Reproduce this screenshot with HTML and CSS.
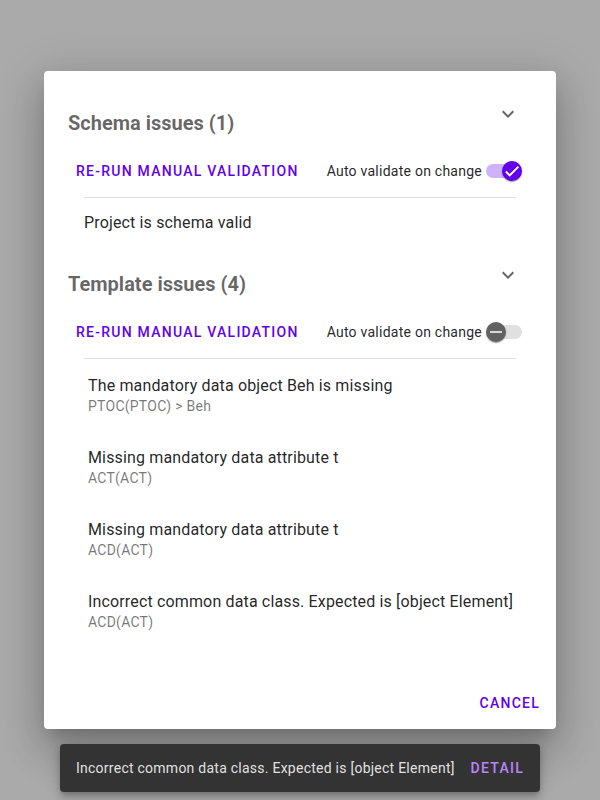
FILE: index.html
```html
<!DOCTYPE html>
<html lang="en">
<head>
<meta charset="utf-8">
<title>Validation</title>
<link rel="stylesheet" href="styles.css">
</head>
<body>
<div class="scrim">
  <div class="dialog">
    <div class="content">
      <section class="group">
        <div class="group-header">
          <h2 class="group-title">Schema issues (1)</h2>
          <button class="icon-btn" aria-label="expand"><svg viewBox="0 0 24 24" width="24" height="24"><path d="M16.59 8.59L12 13.17 7.41 8.59 6 10l6 6 6-6z" fill="#666"/></svg></button>
        </div>
        <div class="controls">
          <button class="text-btn">Re-run manual validation</button>
          <label class="formfield">
            <span>Auto validate on change</span>
            <span class="switch on">
              <span class="track"></span>
              <span class="handle"><svg viewBox="0 0 24 24" width="18" height="18"><path d="M19.69,5.23L8.96,15.96l-4.23-4.24L2.96,13.5l6,6L21.46,7L19.69,5.23z" fill="#fff"/></svg></span>
            </span>
          </label>
        </div>
        <hr class="divider">
        <ul class="list">
          <li class="item single">Project is schema valid</li>
        </ul>
      </section>
      <section class="group">
        <div class="group-header">
          <h2 class="group-title">Template issues (4)</h2>
          <button class="icon-btn" aria-label="expand"><svg viewBox="0 0 24 24" width="24" height="24"><path d="M16.59 8.59L12 13.17 7.41 8.59 6 10l6 6 6-6z" fill="#666"/></svg></button>
        </div>
        <div class="controls">
          <button class="text-btn">Re-run manual validation</button>
          <label class="formfield">
            <span>Auto validate on change</span>
            <span class="switch off">
              <span class="track"></span>
              <span class="handle"><svg viewBox="0 0 24 24" width="18" height="18"><path d="M20 13H4v-2h16v2z" fill="#fff"/></svg></span>
            </span>
          </label>
        </div>
        <hr class="divider">
        <ul class="list">
          <li class="item double"><span class="primary">The mandatory data object Beh is missing</span><span class="secondary">PTOC(PTOC) &gt; Beh</span></li>
          <li class="item double"><span class="primary">Missing mandatory data attribute t</span><span class="secondary">ACT(ACT)</span></li>
          <li class="item double"><span class="primary">Missing mandatory data attribute t</span><span class="secondary">ACD(ACT)</span></li>
          <li class="item double"><span class="primary">Incorrect common data class. Expected is [object Element]</span><span class="secondary">ACD(ACT)</span></li>
        </ul>
      </section>
    </div>
    <div class="actions">
      <button class="text-btn">Cancel</button>
    </div>
  </div>
  <div class="snackbar">
    <span class="snack-label">Incorrect common data class. Expected is [object Element]</span>
    <button class="text-btn snack-btn">Detail</button>
  </div>
</div>
</body>
</html>
```
FILE: styles.css
```css
* { box-sizing: border-box; }
html, body { margin: 0; padding: 0; }
body {
  font-family: Roboto, "Liberation Sans", sans-serif;
  background: #aaaaaa;
  -webkit-font-smoothing: antialiased;
}
.scrim {
  position: relative;
  min-height: 800px;
  display: flex;
  align-items: center;
  justify-content: center;
  background: #aaaaaa;
}
.dialog {
  width: 512px;
  background: #fff;
  border-radius: 4px;
  box-shadow: 0 11px 15px -7px rgba(0,0,0,.2), 0 24px 38px 3px rgba(0,0,0,.14), 0 9px 46px 8px rgba(0,0,0,.12);
  display: flex;
  flex-direction: column;
}
.content {
  padding: 14px 24px 30px;
}
.group-header {
  height: 68px;
  display: flex;
  justify-content: space-between;
  align-items: flex-start;
}
.group-title {
  margin: 0;
  padding-top: 28px;
  font-size: 20px;
  line-height: 20px;
  font-weight: 700;
  letter-spacing: 0;
  color: rgba(0,0,0,0.6);
}
.icon-btn {
  width: 48px;
  height: 48px;
  margin-top: 5px;
  border: 0;
  padding: 12px;
  background: none;
  display: flex;
  align-items: center;
  justify-content: center;
}
.controls {
  height: 36px;
  display: flex;
  align-items: center;
  justify-content: space-between;
}
.text-btn {
  height: 36px;
  padding: 0 8px;
  border: 0;
  background: none;
  font-family: Roboto, "Liberation Sans", sans-serif;
  font-size: 14px;
  font-weight: 500;
  letter-spacing: 1.25px;
  text-transform: uppercase;
  color: #6200ee;
}
.formfield {
  display: flex;
  align-items: center;
  padding-right: 10px;
  font-size: 14px;
  letter-spacing: 0.25px;
  color: rgba(0,0,0,0.87);
}
.switch {
  position: relative;
  width: 36px;
  height: 20px;
  margin-left: 4px;
  display: block;
}
.track {
  position: absolute;
  left: 0;
  top: 3px;
  width: 36px;
  height: 14px;
  border-radius: 7px;
}
.handle {
  position: absolute;
  top: 0;
  width: 20px;
  height: 20px;
  border-radius: 50%;
  display: flex;
  align-items: center;
  justify-content: center;
  box-shadow: 0 2px 1px -1px rgba(0,0,0,.2), 0 1px 1px 0 rgba(0,0,0,.14), 0 1px 3px 0 rgba(0,0,0,.12);
}
.switch.on .track { background: #cfb3f9; }
.switch.on .handle { left: 16px; background: #6200ee; }
.switch.off .track { background: #e0e0e0; }
.switch.off .handle { left: 0; background: #616161; }
.divider {
  margin: 8px 16px 0;
  border: 0;
  height: 1px;
  background: #e0e0e0;
}
.list {
  margin: 0;
  padding: 0;
  list-style: none;
}
.item {
  color: rgba(0,0,0,0.87);
  font-size: 16px;
  letter-spacing: 0.15px;
}
.item.single {
  height: 48px;
  padding: 0 16px;
  display: flex;
  align-items: center;
}
.item.double {
  height: 72px;
  padding: 17px 16px 0 20px;
  white-space: nowrap;
}
.primary {
  display: block;
  line-height: 20px;
}
.secondary {
  display: block;
  line-height: 20px;
  font-size: 14px;
  letter-spacing: 0.25px;
  color: rgba(0,0,0,0.54);
}
.actions {
  height: 52px;
  padding: 8px;
  display: flex;
  justify-content: flex-end;
  align-items: center;
}
.snackbar {
  position: absolute;
  left: 60px;
  bottom: 8px;
  width: 480px;
  height: 48px;
  background: #333333;
  border-radius: 4px;
  padding: 0 8px 0 16px;
  display: flex;
  align-items: center;
  box-shadow: 0 3px 5px -1px rgba(0,0,0,.2), 0 6px 10px 0 rgba(0,0,0,.14), 0 1px 18px 0 rgba(0,0,0,.12);
}
.snack-label {
  font-size: 14px;
  letter-spacing: 0.25px;
  color: rgba(255,255,255,0.87);
}
.snack-btn {
  margin-left: auto;
  color: #bb86fc;
}
```
